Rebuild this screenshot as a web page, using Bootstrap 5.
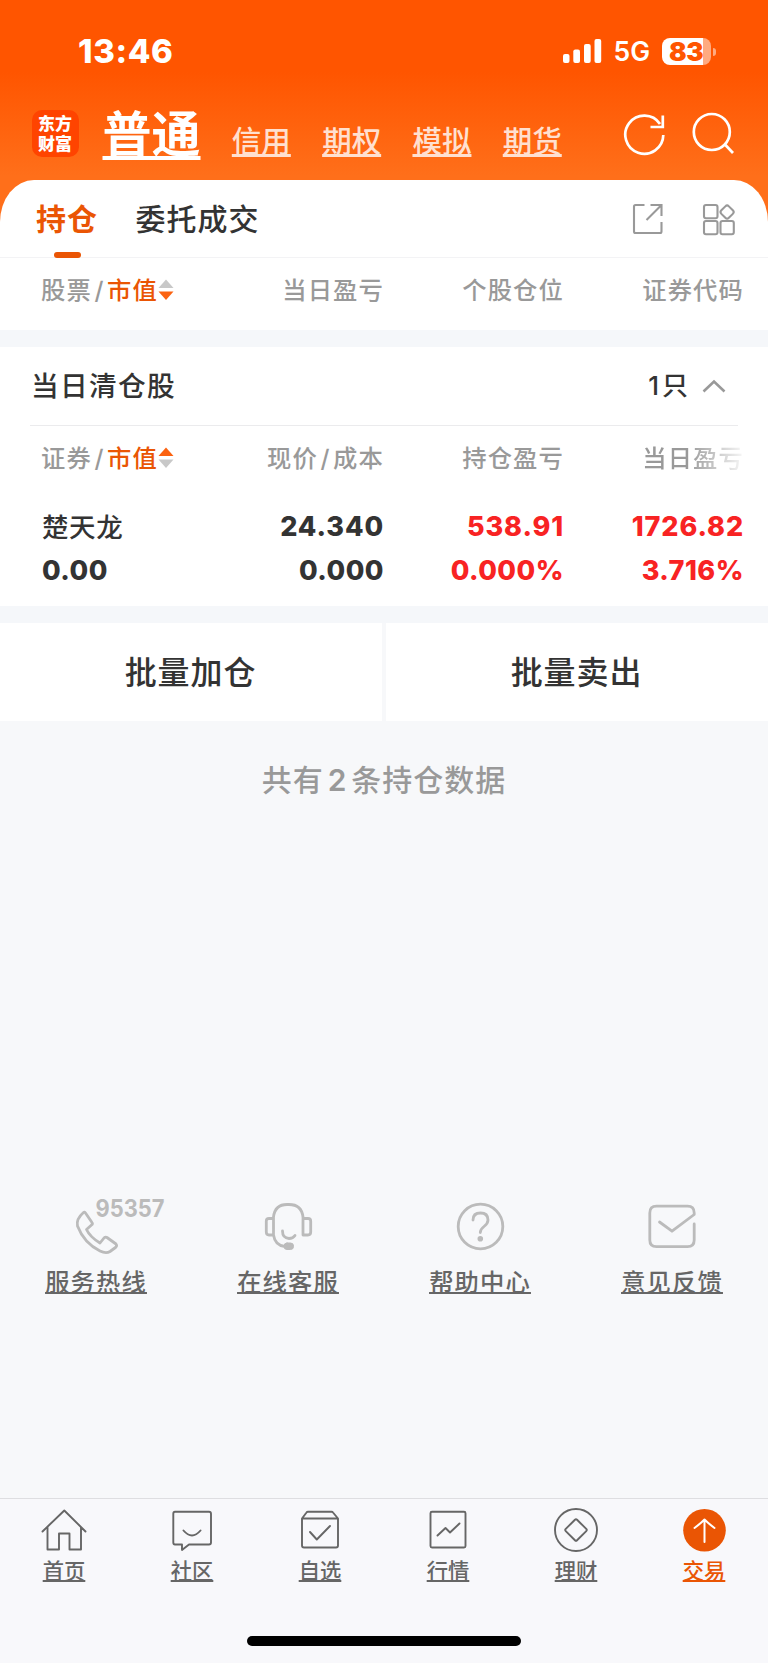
<!DOCTYPE html>
<html lang="zh-CN">
<head>
<meta charset="utf-8">
<meta name="viewport" content="width=device-width, initial-scale=1">
<title>持仓</title>
<link rel="stylesheet" href="https://cdn.jsdelivr.net/npm/bootstrap@5.3.0/dist/css/bootstrap.min.css">
<style>
:root { --brand: #ea5504; --ink: #333; --muted: #999; --band: #f5f7fa; }
body { font-family: Inter, "Noto Sans CJK SC", sans-serif; color: var(--ink); background: #f7f8fa; line-height: 1; overflow: hidden; }
svg { display: block; flex: none; }
.screen { width: 768px; height: 1663px; }
.top { height: 222px; margin-bottom: -42px; background: linear-gradient(#ff5500 0, #ff5500 72px, #ff6f1a 176px); color: #fff; }
.statusbar { height: 103px; padding: 0 52px 0 78px; }
.clock { font-size: 33px; font-weight: 800; letter-spacing: .6px; }
.net { font-size: 26.5px; font-weight: 600; margin-left: 11px; letter-spacing: 0; }
.battery { width: 49px; height: 27px; border-radius: 8px; margin-left: 12px; background: linear-gradient(90deg, #fff 41px, #ffaa80 41px); color: #ff5500; font-size: 26px; font-weight: 900; line-height: 27px; padding-left: 7px; letter-spacing: -.3px; }
.nub { width: 3px; height: 8px; margin-left: 2px; border-radius: 0 4px 4px 0; background: #ffaa80; }
.appbar { height: 77px; padding-left: 32px; padding-right: 33px; }
.logo { width: 47px; height: 47px; border-radius: 10px; background: #ff4400; font-size: 17px; font-weight: 900; line-height: 20px; margin-top: 7px; padding: 4px 1px 0 0; }
.acct { color: #fff; text-decoration: underline; text-decoration-skip-ink: none; white-space: nowrap; }
.acct-main { font-size: 49px; font-weight: 600; line-height: 60px; margin: 2px 0 0 23.5px; text-decoration-thickness: 4px; text-underline-offset: 4px; }
.acct-sub { font-size: 29.5px; font-weight: 500; line-height: 40px; margin: 18px 0 0 31.3px; color: #ffe0d0; text-decoration-thickness: 2.5px; text-underline-offset: 2px; }
.sheet { position: relative; background: #fff; border-radius: 34px 34px 0 0 / 42px 42px 0 0; }
.tabs { height: 78px; padding: 0 32px 0 36px; border-bottom: 1px solid #f3f3f5; }
.tab-item { font-size: 30px; letter-spacing: 1px; height: 77px; line-height: 79px; color: var(--ink); font-weight: 500; }
.tab-item.on { color: var(--brand); font-weight: 700; margin-right: 37.5px; position: relative; }
.tab-item.on::after { content: ""; position: absolute; left: 17.5px; bottom: -1px; width: 27.5px; height: 5.5px; border-radius: 3px; background: var(--brand); }
.quad { display: grid; grid-template-columns: 163px 180px 180px 180px; align-content: start; padding-left: 41px; text-align: right; white-space: nowrap; }
.quad > :first-child, .quad > :nth-child(5) { text-align: left; }
.heads { font-size: 24.3px; font-weight: 500; letter-spacing: 1.15px; color: var(--muted); line-height: 65px; }
.heads > div { height: 65px; }
.heads b { color: var(--brand); font-weight: 500; }
.heads i { font-style: normal; margin: 0 2.5px; }
.fade-end { -webkit-mask-image: linear-gradient(90deg, #000 124px, transparent 184px); mask-image: linear-gradient(90deg, #000 124px, transparent 184px); }
.band { height: 17px; background: var(--band); }
.sect { height: 79px; margin: 0 30px; border-bottom: 1px solid #ebebed; font-weight: 500; padding: 0 12px 0 1px; }
.sect-name { font-size: 27.7px; letter-spacing: 1.3px; padding-top: 2px; }
.sect-count { font-size: 26px; letter-spacing: 3px; margin-right: 11px; }
.figs { font-size: 27px; font-weight: 800; line-height: 44.5px; letter-spacing: .9px; padding-top: 1px; }
.figs > :nth-child(n+5) { letter-spacing: .5px; }
.figs > :nth-child(5) { padding-left: 1px; }
.stock { font-size: 26.5px; font-weight: 500; letter-spacing: .6px; padding-left: 1px; }
.up { color: #f82323; }
.acts { gap: 4px; height: 99px; }
.act { flex: 1; border: 0; background: #fff; font-size: 32px; font-weight: 500; letter-spacing: .9px; color: var(--ink); padding: 2px 1px 0 0; border-radius: 0; }
.total { font-size: 30px; letter-spacing: 1px; color: var(--muted); font-weight: 500; line-height: 40px; margin-top: 39px; text-align: center; }
.total span { margin: 0 4px; font-weight: 600; }
.svc { margin-top: 395px; height: 110px; }
.svc a, .dock a { color: #666; text-decoration: underline; text-decoration-skip-ink: none; flex: 1; }
.svc-ico, .dock-ico { fill: none; stroke-linecap: round; stroke-linejoin: round; }
.svc-ico { stroke: #bbb; stroke-width: 2.8; }
.svc span { font-size: 24.3px; letter-spacing: 1.1px; font-weight: 500; line-height: 30px; margin-top: 3px; text-decoration-line: underline; text-decoration-skip-ink: none; }
.svc a, .dock a { text-decoration-thickness: 1.5px; text-underline-offset: 1px; }
.dock { margin-top: 193px; height: 165px; border-top: 1px solid #dedee1; background: #f8f8fb; }
.dock a { font-size: 21.3px; font-weight: 500; line-height: 24px; }
.dock-ico { stroke: #666; stroke-width: 1.9; }
.dock a.on { color: var(--brand); }
.homebar { width: 274px; height: 10px; border-radius: 5px; background: #000; margin-bottom: 17px; }
</style>
</head>
<body>
<div class="screen d-flex flex-column">
  <header class="top">
    <div class="statusbar d-flex align-items-center">
      <span class="clock me-auto">13:46</span>
      <svg width="39" height="25" fill="#fff"><rect x="0" y="15" width="6.5" height="9" rx="2"/><rect x="10.3" y="10.5" width="6.7" height="13.5" rx="2"/><rect x="21" y="5" width="6.7" height="19" rx="2"/><rect x="31.5" y="0" width="6.7" height="24" rx="2"/></svg>
      <span class="net">5G</span>
      <span class="battery">83</span><span class="nub"></span>
    </div>
    <div class="appbar d-flex">
      <div class="logo text-center">东方<br>财富</div>
      <a class="acct acct-main">普通</a>
      <a class="acct acct-sub">信用</a><a class="acct acct-sub">期权</a><a class="acct acct-sub">模拟</a><a class="acct acct-sub">期货</a>
      <svg class="ms-auto" width="112" height="60" viewBox="623 103 112 60" fill="none" stroke="#fff" stroke-width="2.7"><path d="M663.300 135A19 19 0 1 1 660 124M662.800 115.500V127H650.500"/><circle cx="711.800" cy="132" r="18"/><path d="M724.500 144L733 153"/></svg>
    </div>
  </header>
  <main class="sheet">
    <nav class="tabs d-flex align-items-start">
      <a class="tab-item on text-decoration-none">持仓</a><a class="tab-item text-decoration-none">委托成交</a>
      <svg class="ms-auto" width="104" height="34" viewBox="632 203 104 34" fill="none" stroke="#999" stroke-width="2.100" style="margin-top:23px"><path d="M644.500 205H635.500Q634 205 634 206.500V231.500Q634 233 635.500 233H660Q661.500 233 661.500 231.500V222M650.500 205H661.500V216M661 205.500L646.500 220"/><rect x="704" y="205" width="13.500" height="13.300" rx="2"/><rect x="704" y="221" width="13.500" height="13.300" rx="2"/><rect x="720.500" y="221" width="13.300" height="13.300" rx="2"/><rect x="721.800" y="206.800" width="10.600" height="10.600" rx="2.500" transform="rotate(45 727.100 212.100)"/></svg>
    </nav>
    <div class="quad heads" style="height:72px">
      <div class="d-flex align-items-center">股票<i>/</i><b>市值</b><svg width="16" height="22"><path d="M8 .5L15.500 9H.5Z" fill="#c8c8c8"/><path d="M.5 12.500H15.500L8 21Z" fill="#fb6210"/></svg></div>
      <div>当日盈亏</div><div>个股仓位</div><div>证券代码</div>
    </div>
    <div class="band"></div>
    <div class="sect d-flex align-items-center">
      <span class="sect-name me-auto">当日清仓股</span><span class="sect-count">1只</span>
      <svg width="24" height="14" fill="none" stroke="#999" stroke-width="2.600"><path d="M1.500 12.500L12 2.500L22.500 12.500"/></svg>
    </div>
    <div class="quad heads" style="height:78px">
      <div class="d-flex align-items-center">证券<i>/</i><b>市值</b><svg width="16" height="22"><path d="M8 .5L15.500 9H.5Z" fill="#fb6210"/><path d="M.5 12.500H15.500L8 21Z" fill="#c8c8c8"/></svg></div>
      <div>现价<i>/</i>成本</div><div>持仓盈亏</div><div class="fade-end">当日盈亏</div>
    </div>
    <div class="quad figs" style="height:102px">
      <div class="stock">楚天龙</div><div>24.340</div><div class="up">538.91</div><div class="up">1726.82</div>
      <div>0.00</div><div>0.000</div><div class="up">0.000%</div><div class="up">3.716%</div>
    </div>
  </main>
  <div class="band"></div>
  <div class="acts d-flex"><button class="act">批量加仓</button><button class="act">批量卖出</button></div>
  <div class="total">共有<span>2</span>条持仓数据</div>
  <div class="svc d-flex">
    <a class="d-flex flex-column align-items-center"><svg class="svc-ico" width="192" height="69" viewBox="0 1195 192 69"><path d="M83.500 1212.500Q76 1219 77.500 1226Q84 1243 100 1251Q106 1254 110 1251.500L115.500 1247.500Q117.500 1246 116 1244L107 1237.500Q105.500 1236.500 104 1238L100 1243Q90 1237 86.500 1229.500L91.500 1225Q93 1223.800 92 1222.500L85.500 1213Q84.500 1211.700 83.500 1212.500Z"/><text x="95.500" y="1216.500" textLength="69" lengthAdjust="spacingAndGlyphs" font-family="Inter" font-weight="700" font-size="24" fill="#bbb" stroke="none">95357</text></svg><span>服务热线</span></a>
    <a class="d-flex flex-column align-items-center"><svg class="svc-ico" width="192" height="69" viewBox="192 1195 192 69"><path d="M273.500 1235V1217Q275 1204.500 287 1204.500H289Q301.500 1204.500 303 1217V1235M273.500 1235Q275 1245.500 285 1246.500M273.500 1218.500H269Q266.300 1218.500 266.300 1221V1232Q266.300 1235 269 1235H273.500M303 1218.500H308Q310.700 1218.500 310.700 1221V1232Q310.700 1235 308 1235H303M282.500 1231Q282.500 1238 289 1238.500Q293 1238.500 295 1235.500"/><rect x="284" y="1243" width="9.500" height="6.500" rx="3" fill="#bbb" stroke-width="1"/></svg><span>在线客服</span></a>
    <a class="d-flex flex-column align-items-center"><svg class="svc-ico" width="192" height="69" viewBox="384 1195 192 69"><circle cx="480.500" cy="1226.500" r="22.300"/><path d="M473 1220Q473 1213 480.500 1213Q488 1213 488 1220Q488 1223.500 484 1226.500Q480.300 1229.300 480.300 1232.500"/><circle cx="480.300" cy="1238.700" r="1.400" fill="#bbb"/></svg><span>帮助中心</span></a>
    <a class="d-flex flex-column align-items-center"><svg class="svc-ico" width="192" height="69" viewBox="576 1195 192 69"><path d="M694.200 1224V1240Q694.200 1246.700 687.500 1246.700H656.500Q649.800 1246.700 649.800 1240V1213Q649.800 1206.200 656.500 1206.200H687.500Q694.200 1206.200 694.200 1213V1214.500L672 1231.200L659.500 1222"/></svg><span>意见反馈</span></a>
  </div>
  <nav class="dock d-flex flex-column align-items-center">
    <div class="d-flex w-100">
      <a class="d-flex flex-column align-items-center"><svg class="dock-ico" width="128" height="60" viewBox="0 1499 128 60"><path d="M42.500 1531.500L64.300 1510.500L85.500 1531.500M47.500 1527V1549.500H59V1533.500H69.500V1549.500H81V1527"/></svg>首页</a>
      <a class="d-flex flex-column align-items-center"><svg class="dock-ico" width="128" height="60" viewBox="128 1499 128 60"><path d="M175 1511.700H209Q211 1511.700 211 1513.700V1542.500Q211 1544.500 209 1544.500H189L182 1550V1544.500H175Q173.300 1544.500 173.300 1542.500V1513.700Q173.300 1511.700 175 1511.700ZM183.500 1530.500Q192 1540.500 200.500 1530.500"/></svg>社区</a>
      <a class="d-flex flex-column align-items-center"><svg class="dock-ico" width="128" height="60" viewBox="256 1499 128 60"><path d="M302 1518.500L306.500 1512.500Q307 1511.800 308 1511.800H331.500Q332.500 1511.800 333 1512.500L338 1518.500V1545.500Q338 1547.500 336 1547.500H304Q302 1547.500 302 1545.500ZM302 1518.500H338M310 1532L316.800 1539.500L330 1526"/></svg>自选</a>
      <a class="d-flex flex-column align-items-center"><svg class="dock-ico" width="128" height="60" viewBox="384 1499 128 60"><rect x="430.500" y="1511.800" width="35" height="35.700" rx="1.500"/><path d="M437.500 1535.500L445.500 1528L450 1532.500L459.500 1523.500"/></svg>行情</a>
      <a class="d-flex flex-column align-items-center"><svg class="dock-ico" width="128" height="60" viewBox="512 1499 128 60"><circle cx="576" cy="1530" r="21"/><rect x="568" y="1522" width="16" height="16" rx="1.500" transform="rotate(45 576 1530)"/></svg>理财</a>
      <a class="on d-flex flex-column align-items-center"><svg class="dock-ico" width="128" height="60" viewBox="640 1499 128 60"><circle cx="704.500" cy="1530.300" r="21.300" fill="#ea5504" stroke="none"/><path d="M704.500 1542V1520M694.500 1528Q700 1524 704.500 1519.500Q709 1524 714.500 1528" stroke="#fff" stroke-width="2"/></svg>交易</a>
    </div>
    <div class="homebar mt-auto"></div>
  </nav>
</div>
<script src="https://cdn.jsdelivr.net/npm/bootstrap@5.3.0/dist/js/bootstrap.bundle.min.js"></script>
</body>
</html>
